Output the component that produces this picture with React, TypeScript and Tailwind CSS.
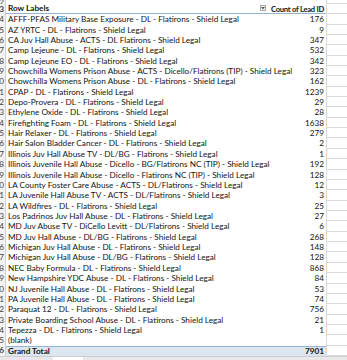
const rows: [string, string][] = [
  ['AFFF-PFAS Military Base Exposure - DL - Flatirons - Shield Legal', '176'],
  ['AZ YRTC - DL - Flatirons - Shield Legal', '9'],
  ['CA Juv Hall Abuse - ACTS - DL Flatirons - Shield Legal', '347'],
  ['Camp Lejeune - DL - Flatirons - Shield Legal', '532'],
  ['Camp Lejeune EO - DL - Flatirons - Shield Legal', '342'],
  ['Chowchilla Womens Prison Abuse - ACTS - Dicello/Flatirons (TIP) - Shield Legal', '323'],
  ['Chowchilla Womens Prison Abuse - DL - Flatirons - Shield Legal', '162'],
  ['CPAP - DL - Flatirons - Shield Legal', '1239'],
  ['Depo-Provera - DL - Flatirons - Shield Legal', '29'],
  ['Ethylene Oxide - DL - Flatirons - Shield Legal', '28'],
  ['Firefighting Foam - DL - Flatirons - Shield Legal', '1638'],
  ['Hair Relaxer - DL - Flatirons - Shield Legal', '279'],
  ['Hair Salon Bladder Cancer - DL - Flatirons - Shield Legal', '2'],
  ['Illinois Juv Hall Abuse TV - DL/BG - Flatirons - Shield Legal', '1'],
  ['Illinois Juvenile Hall Abuse - Dicello - BG/Flatirons NC (TIP) - Shield Legal', '192'],
  ['Illinois Juvenile Hall Abuse - Dicello - Flatirons NC (TIP) - Shield Legal', '128'],
  ['LA County Foster Care Abuse - ACTS - DL/Flatirons - Shield Legal', '12'],
  ['LA Juvenile Hall Abuse TV - ACTS - DL/Flatirons - Shield Legal', '3'],
  ['LA Wildfires - DL - Flatirons - Shield Legal', '25'],
  ['Los Padrinos Juv Hall Abuse - DL - Flatirons - Shield Legal', '27'],
  ['MD Juv Abuse TV - DiCello Levitt - DL/Flatirons - Shield Legal', '6'],
  ['MD Juv Hall Abuse - DL/BG - Flatirons - Shield Legal', '268'],
  ['Michigan Juv Hall Abuse - DL - Flatirons - Shield Legal', '148'],
  ['Michigan Juv Hall Abuse - DL/BG - Flatirons - Shield Legal', '128'],
  ['NEC Baby Formula - DL - Flatirons - Shield Legal', '868'],
  ['New Hampshire YDC Abuse - DL - Flatirons - Shield Legal', '84'],
  ['NJ Juvenile Hall Abuse - DL - Flatirons - Shield Legal', '53'],
  ['PA Juvenile Hall Abuse - DL - Flatirons - Shield Legal', '74'],
  ['Paraquat 12 - DL - Flatirons - Shield Legal', '756'],
  ['Private Boarding School Abuse - DL - Flatirons - Shield Legal', '21'],
  ['Tepezza - DL - Flatirons - Shield Legal', '1'],
  ['(blank)', ''],
];

function RowNum({ n }: { n: number }) {
  return (
    <div className="w-[6px] shrink-0 overflow-hidden flex justify-end items-center bg-[#f3f3f3] border-r border-[#d0d0d0] text-[#444] pr-[1px]">
      <span className="whitespace-nowrap">{n}</span>
    </div>
  );
}

function SpareCell() {
  return <div className="flex-1 border-l border-b border-[#dadada]" />;
}

function DataRow({ n, label, value }: { n: number; label: string; value: string }) {
  return (
    <div className="flex h-[10.36px] leading-[10.36px]">
      <RowNum n={n} />
      <div className="w-[263px] shrink-0 pl-[2px] whitespace-nowrap overflow-visible">{label}</div>
      <div className="w-[57px] shrink-0 text-right pr-[2px]">{value}</div>
      <SpareCell />
    </div>
  );
}

export default function App() {
  return (
    <div
      className="w-[347px] h-[360px] overflow-hidden bg-white text-[#141414] text-[8.2px] flex flex-col"
      style={{ fontFamily: 'Lato, "Liberation Sans", sans-serif' }}
    >
      <div className="flex h-[3.8px] shrink-0 overflow-hidden">
        <RowNum n={2} />
        <div className="w-[320px] shrink-0" />
        <SpareCell />
      </div>

      <div className="flex h-[10.36px] leading-[10.36px] shrink-0 font-bold">
        <RowNum n={3} />
        <div className="w-[263px] shrink-0 pl-[2px] flex items-center border-b border-[#95b3d7]">
          <span className="flex-1">Row Labels</span>
          <span className="w-[6px] h-[6px] mr-[3px] border border-[#a6a6a6] bg-[#f4f4f4] flex items-center justify-center">
            <svg width="4" height="3" viewBox="0 0 4 3">
              <path d="M0 0 L4 0 L2 2.5 Z" fill="#555" />
            </svg>
          </span>
        </div>
        <div className="w-[57px] shrink-0 flex justify-end pr-[2px] border-b border-[#95b3d7]">
          <span className="whitespace-nowrap text-[7.6px] tracking-[-0.25px]">Count of Lead ID</span>
        </div>
        <SpareCell />
      </div>

      {rows.map(([label, value], i) => (
        <DataRow key={label} n={i + 4} label={label} value={value} />
      ))}

      <div className="flex h-[10.36px] leading-[9.36px] shrink-0 font-bold">
        <RowNum n={36} />
        <div className="w-[263px] shrink-0 pl-[2px] bg-[#dce6f1] border-t border-[#95b3d7]">Grand Total</div>
        <div className="w-[57px] shrink-0 text-right pr-[2px] bg-[#dce6f1] border-t border-[#95b3d7]">7901</div>
        <SpareCell />
      </div>

      <div className="flex-1 flex bg-[#e9e9e9] border-t border-[#cfcfcf]">
        <div className="w-[53px]" />
        <div className="w-[30px] bg-white" />
      </div>
    </div>
  );
}
